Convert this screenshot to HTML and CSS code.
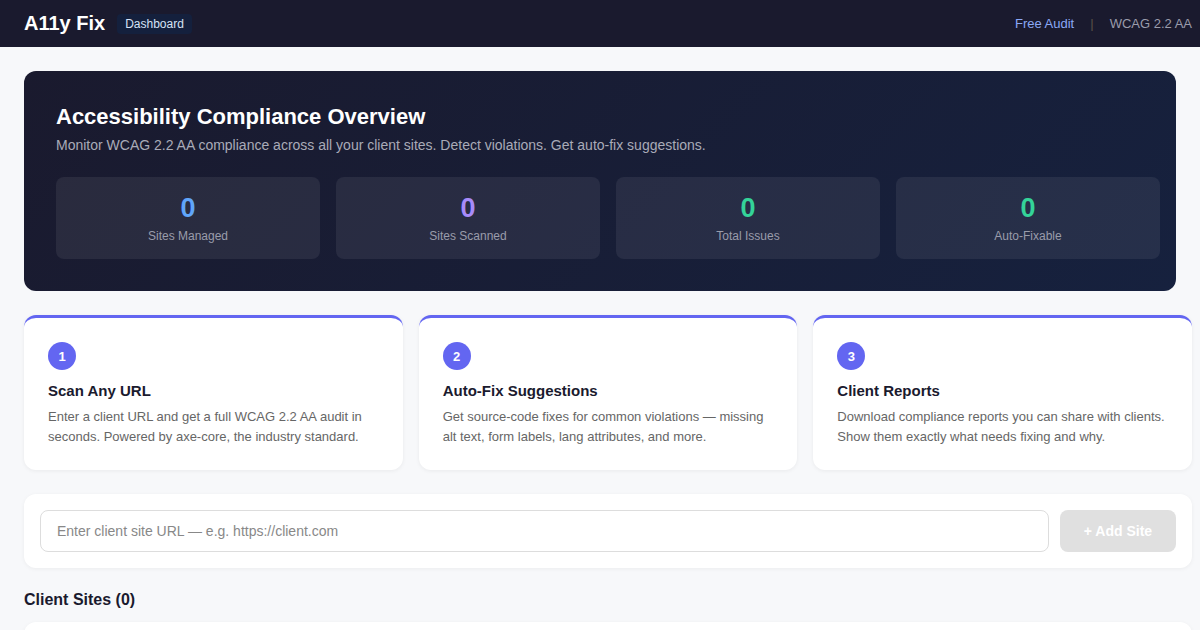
FILE: index.html
```html
<!DOCTYPE html>
<html>
<head>
    <title>A11y Fix - Dashboard</title>
    <link rel="stylesheet" href="styles.css">
</head>
<body>
    <header class="topbar">
        <div class="brand">
            <span class="logo">A11y Fix</span>
            <span class="badge">Dashboard</span>
        </div>
        <nav class="topnav">
            <a href="#" class="nav-link">Free Audit</a>
            <span class="sep">|</span>
            <span class="nav-muted">WCAG 2.2 AA</span>
        </nav>
    </header>

    <main class="main">
        <section class="hero">
            <h1>Accessibility Compliance Overview</h1>
            <p class="hero-sub">Monitor WCAG 2.2 AA compliance across all your client sites. Detect violations. Get auto-fix suggestions.</p>
            <div class="stats">
                <div class="stat">
                    <div class="stat-num blue">0</div>
                    <div class="stat-label">Sites Managed</div>
                </div>
                <div class="stat">
                    <div class="stat-num purple">0</div>
                    <div class="stat-label">Sites Scanned</div>
                </div>
                <div class="stat">
                    <div class="stat-num green">0</div>
                    <div class="stat-label">Total Issues</div>
                </div>
                <div class="stat">
                    <div class="stat-num green">0</div>
                    <div class="stat-label">Auto-Fixable</div>
                </div>
            </div>
        </section>

        <section class="features">
            <div class="feature">
                <div class="step">1</div>
                <h3>Scan Any URL</h3>
                <p>Enter a client URL and get a full WCAG 2.2 AA audit in seconds. Powered by axe-core, the industry standard.</p>
            </div>
            <div class="feature">
                <div class="step">2</div>
                <h3>Auto-Fix Suggestions</h3>
                <p>Get source-code fixes for common violations — missing alt text, form labels, lang attributes, and more.</p>
            </div>
            <div class="feature">
                <div class="step">3</div>
                <h3>Client Reports</h3>
                <p>Download compliance reports you can share with clients. Show them exactly what needs fixing and why.</p>
            </div>
        </section>

        <section class="add-site">
            <input type="text" class="url-input" placeholder="Enter client site URL — e.g. https://client.com">
            <button class="add-btn" disabled>+ Add Site</button>
        </section>

        <h2 class="section-title">Client Sites (0)</h2>
        <div class="site-list"></div>
    </main>
</body>
</html>
```

FILE: styles.css
```css
* {
    box-sizing: border-box;
}

body {
    margin: 0;
    font-family: "Liberation Sans", Arial, sans-serif;
    background-color: #f7f8fa;
    color: #1a1a2e;
}

.topbar {
    height: 47px;
    background: #1a1a2e;
    display: flex;
    align-items: center;
    justify-content: space-between;
    padding: 0 8px 0 24px;
}

.brand {
    display: flex;
    align-items: center;
    gap: 12px;
}

.logo {
    color: white;
    font-size: 20px;
    font-weight: bold;
}

.badge {
    background: #14203d;
    color: #d6e2f5;
    font-size: 12px;
    padding: 3px 8px;
    border-radius: 4px;
}

.topnav {
    display: flex;
    align-items: center;
    gap: 16px;
    font-size: 13px;
}

.nav-link {
    color: #8aa8f5;
    text-decoration: none;
}

.sep {
    color: #5a5148;
}

.nav-muted {
    color: #9a9cab;
}

.main {
    padding: 24px 8px 0 24px;
}

.hero {
    margin-right: 16px;
    height: 220px;
    padding: 32px;
    border-radius: 12px;
    background: linear-gradient(135deg, #1a1a2e 0%, #16213e 100%);
    color: white;
}

.hero h1 {
    margin: 0;
    font-size: 22px;
    line-height: 28px;
}

.hero-sub {
    margin: 4px 0 0;
    font-size: 14px;
    line-height: 20px;
    color: #a9abb8;
}

.stats {
    display: grid;
    grid-template-columns: repeat(4, 1fr);
    gap: 16px;
    margin: 22px -16px 0 0;
}

.stat {
    height: 82px;
    background: rgba(255, 255, 255, 0.07);
    border-radius: 8px;
    text-align: center;
    padding-top: 14px;
}

.stat-num {
    font-size: 27px;
    font-weight: bold;
    line-height: 34px;
}

.stat-num.blue {
    color: #60a5fa;
}

.stat-num.purple {
    color: #a78bfa;
}

.stat-num.green {
    color: #34d399;
}

.stat-label {
    margin-top: 3px;
    font-size: 12px;
    line-height: 16px;
    color: #9a9cab;
}

.features {
    display: grid;
    grid-template-columns: repeat(3, 1fr);
    gap: 16px;
    margin-top: 24px;
}

.feature {
    background: white;
    border-top: 3px solid #6366f1;
    border-radius: 12px;
    padding: 24px 24px 23px;
    box-shadow: 0 1px 4px rgba(0, 0, 0, 0.06);
}

.step {
    width: 28px;
    height: 28px;
    border-radius: 50%;
    background: #6366f1;
    color: white;
    font-size: 13px;
    font-weight: bold;
    display: flex;
    align-items: center;
    justify-content: center;
}

.feature h3 {
    margin: 11px 0 0;
    font-size: 15px;
    line-height: 20px;
    color: #1a1a2e;
}

.feature p {
    margin: 6px 0 0;
    font-size: 13px;
    line-height: 20px;
    color: #666;
}

.add-site {
    display: flex;
    gap: 11px;
    margin-top: 24px;
    background: white;
    border-radius: 12px;
    padding: 16px;
    box-shadow: 0 1px 4px rgba(0, 0, 0, 0.05);
}

.url-input {
    flex: 1;
    height: 42px;
    border: 1px solid #ddd;
    border-radius: 8px;
    padding: 0 16px;
    font-family: "Liberation Sans", Arial, sans-serif;
    font-size: 14px;
    color: #333;
}

.url-input::placeholder {
    color: #888;
}

.add-btn {
    width: 116px;
    height: 42px;
    border: none;
    border-radius: 8px;
    background: #e0e0e0;
    color: white;
    font-family: "Liberation Sans", Arial, sans-serif;
    font-size: 14px;
    font-weight: bold;
}

.section-title {
    margin: 22px 0 0;
    font-size: 16px;
    line-height: 20px;
    color: #1a1a2e;
}

.site-list {
    margin-top: 12px;
    height: 80px;
    background: white;
    border-radius: 12px;
    box-shadow: 0 1px 4px rgba(0, 0, 0, 0.05);
}
```
